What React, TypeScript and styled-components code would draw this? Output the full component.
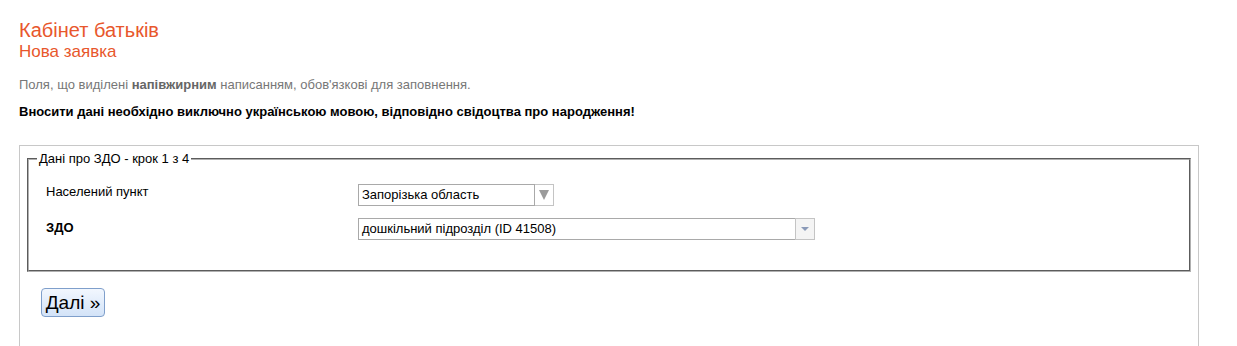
import React from 'react';
import styled, { createGlobalStyle } from 'styled-components';

const Global = createGlobalStyle`
  html, body {
    margin: 0;
    padding: 0;
    background: #fff;
    font-family: "Liberation Sans", Arial, sans-serif;
    color: #000;
  }
`;

const Wrap = styled.div`
  padding: 19px 38px 0 19px;
  height: 346px;
  overflow: hidden;
  box-sizing: border-box;
`;

const Title = styled.h1`
  margin: 0;
  font-size: 20px;
  font-weight: normal;
  line-height: 23px;
  color: #e8572c;
`;

const Subtitle = styled.h2`
  margin: 0;
  font-size: 17px;
  font-weight: normal;
  line-height: 20px;
  color: #e8572c;
`;

const Note = styled.p`
  margin: 15px 0 0;
  font-size: 13px;
  line-height: 16px;
  color: #777;

  b {
    color: #666;
  }
`;

const Warning = styled.p`
  margin: 11px 0 0;
  font-size: 13px;
  line-height: 16px;
  font-weight: bold;
`;

const Panel = styled.div`
  margin-top: 25px;
  border: 1px solid #c8c8c8;
  border-bottom: none;
  padding: 5px 7px 30px;
  min-height: 220px;
`;

const Fieldset = styled.fieldset`
  margin: 0;
  padding: 18px 17px 18px;
  border: 2px groove #b0b0b0;
`;

const Legend = styled.legend`
  font-size: 13px;
  padding: 0 2px;
  margin-left: -9px;
`;

const Row = styled.div`
  display: flex;
  align-items: flex-start;
  height: 34px;
`;

const Label = styled.div<{ $bold?: boolean }>`
  width: 312px;
  font-size: 13px;
  line-height: 15px;
  padding-top: ${p => (p.$bold ? '2px' : '0')};
  font-weight: ${p => (p.$bold ? 'bold' : 'normal')};
`;

const Select = styled.div<{ $w: number }>`
  display: flex;
  width: ${p => p.$w}px;
  height: 22px;
`;

const SelectText = styled.div`
  flex: 1;
  border: 1px solid #a9a9a9;
  font-size: 13px;
  line-height: 20px;
  padding: 0 3px;
  white-space: nowrap;
`;

const ArrowBox = styled.div<{ $light?: boolean }>`
  width: 18px;
  border: 1px solid #c4c4c4;
  border-left: ${p => (p.$light ? '1px solid #c4c4c4' : 'none')};
  background: ${p => (p.$light ? '#f4f4f4' : '#fff')};
  display: flex;
  align-items: center;
  justify-content: center;
  margin-left: ${p => (p.$light ? '-1px' : '0')};
`;

const BigArrow = styled.div`
  width: 0;
  height: 0;
  border-left: 5px solid transparent;
  border-right: 5px solid transparent;
  border-top: 10px solid #9b9b9b;
`;

const SmallArrow = styled.div`
  width: 0;
  height: 0;
  border-left: 4px solid transparent;
  border-right: 4px solid transparent;
  border-top: 4px solid #8a9ab8;
`;

const Button = styled.button`
  margin: 16px 0 0 14px;
  width: 64px;
  height: 29px;
  padding: 0;
  box-sizing: border-box;
  font-family: "Liberation Sans", Arial, sans-serif;
  font-size: 19px;
  color: #000;
  border: 1px solid #7f9fcb;
  border-radius: 4px;
  background: linear-gradient(#f2f7fe, #d3e3f8);
`;

export default () => {
  return (
    <Wrap>
      <Global />
      <Title>Кабінет батьків</Title>
      <Subtitle>Нова заявка</Subtitle>
      <Note>
        Поля, що виділені <b>напівжирним</b> написанням, обов'язкові для заповнення.
      </Note>
      <Warning>
        Вносити дані необхідно виключно українською мовою, відповідно свідоцтва про народження!
      </Warning>

      <Panel>
        <Fieldset>
          <Legend>Дані про ЗДО - крок 1 з 4</Legend>
          <Row>
            <Label>Населений пункт</Label>
            <Select $w={196}>
              <SelectText>Запорізька область</SelectText>
              <ArrowBox>
                <BigArrow />
              </ArrowBox>
            </Select>
          </Row>
          <Row>
            <Label $bold>ЗДО</Label>
            <Select $w={457}>
              <SelectText>дошкільний підрозділ (ID 41508)</SelectText>
              <ArrowBox $light>
                <SmallArrow />
              </ArrowBox>
            </Select>
          </Row>
        </Fieldset>
        <Button>Далі »</Button>
      </Panel>
    </Wrap>
  );
};
